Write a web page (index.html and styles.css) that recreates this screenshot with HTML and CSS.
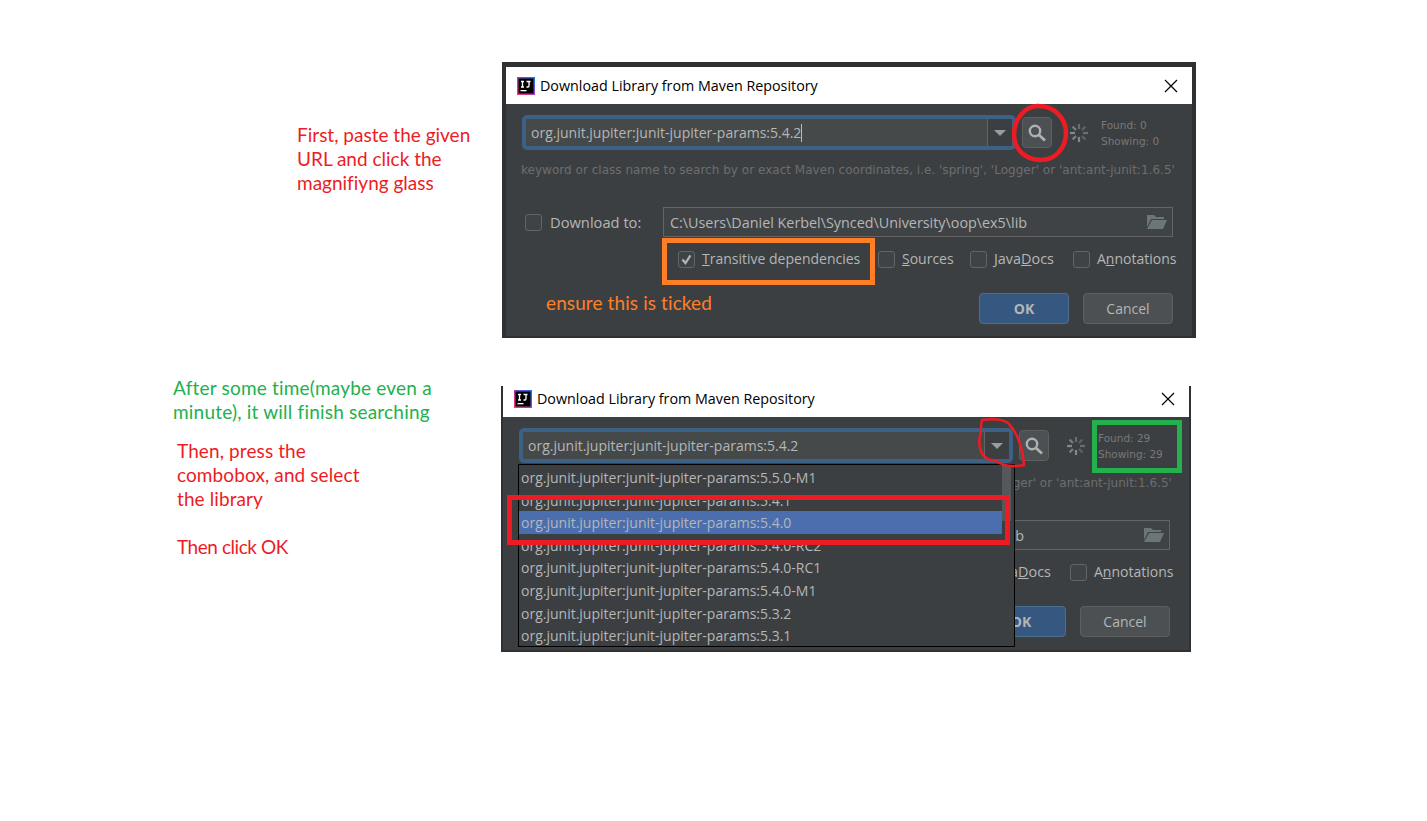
FILE: index.html
```html
<!DOCTYPE html>
<html lang="en">
<head>
<meta charset="utf-8">
<title>Download Library from Maven Repository</title>
<link rel="stylesheet" href="styles.css">
</head>
<body>
<svg width="0" height="0" class="defs">
  <defs>
    <linearGradient id="ij" x1="0" y1="1" x2="1" y2="0">
      <stop offset="0" stop-color="#fe315d"/><stop offset="0.5" stop-color="#a03fc0"/><stop offset="1" stop-color="#087cfa"/>
    </linearGradient>
    <symbol id="logo" viewBox="0 0 18 18">
      <rect width="18" height="18" fill="url(#ij)"/>
      <rect x="1.500" y="1.500" width="15" height="15" fill="#000"/>
      <path d="M4 4.500h3M5.500 4.500v5.500M4 10h3M9.500 4.500h4M12 4.500v4.500q0 1-1 1h-1.500" fill="none" stroke="#fff" stroke-width="1.300"/>
      <rect x="3.500" y="13" width="6" height="1.300" fill="#fff"/>
    </symbol>
    <symbol id="close" viewBox="0 0 14 14">
      <path d="M1 1L13 13M13 1L1 13" stroke="#000" stroke-width="1.200" fill="none"/>
    </symbol>
    <symbol id="search" viewBox="0 0 20 20">
      <circle cx="8" cy="8" r="5.200" fill="none" stroke="#afb1b3" stroke-width="2.400"/>
      <path d="M12 12L18 17.500" stroke="#afb1b3" stroke-width="2.800" fill="none"/>
    </symbol>
    <symbol id="spinner" viewBox="0 0 20 20">
      <g stroke-width="2.200" fill="none">
        <path d="M10 1V6" stroke="#6a6d6f"/><path d="M10 14V19" stroke="#85888a"/>
        <path d="M1 10H6" stroke="#85888a"/><path d="M14 10H19" stroke="#6a6d6f"/>
        <path d="M3.600 3.600L7 7" stroke="#7a7d7f"/><path d="M13 13L16.400 16.400" stroke="#5f6264"/>
        <path d="M16.400 3.600L13 7" stroke="#5f6264"/><path d="M7 13L3.600 16.400" stroke="#7a7d7f"/>
      </g>
    </symbol>
    <symbol id="folder" viewBox="0 0 20 16">
      <path d="M0 2V1h7l2 2h8v2H4L0 13z" fill="#6b7777"/>
      <path d="M5 6h15l-4 9H0z" fill="#6b7777"/>
    </symbol>
    <symbol id="tick" viewBox="0 0 17 17">
      <path d="M3.800 8.500L7.300 12.500L13 3.800" fill="none" stroke="#afb1b3" stroke-width="2.600"/>
    </symbol>
  </defs>
</svg>

<p class="note note-first">First, paste the given<br>URL and click the<br>magnifiyng glass</p>
<p class="note note-time">After some time(maybe even a<br>minute), it will finish searching</p>
<p class="note note-press">Then, press the<br>combobox, and select<br>the library</p>
<p class="note note-ok">Then click OK</p>

<section class="dialog dialog-top">
  <header class="title-bar">
    <svg class="logo"><use href="#logo"/></svg>
    <span class="title-text">Download Library from Maven Repository</span>
    <svg class="close"><use href="#close"/></svg>
  </header>
  <div class="body">
    <div class="search-row">
      <div class="combo">
        <span class="combo-value caret">org.junit.jupiter:junit-jupiter-params:5.4.2</span>
        <span class="combo-arrow"><i class="triangle"></i></span>
      </div>
      <button class="search-btn"><svg class="search-icon"><use href="#search"/></svg></button>
      <svg class="spinner"><use href="#spinner"/></svg>
      <div class="counts"><span>Found: 0</span><span>Showing: 0</span></div>
    </div>
    <p class="hint">keyword or class name to search by or exact Maven coordinates, i.e. 'spring', 'Logger' or 'ant:ant-junit:1.6.5'</p>
    <div class="path-row">
      <span class="check"></span>
      <span class="label label-download">Download to:</span>
      <div class="path-field"><span>C:\Users\Daniel Kerbel\Synced\University\oop\ex5\lib</span><svg class="folder"><use href="#folder"/></svg></div>
    </div>
    <div class="options-row">
      <span class="check"><svg class="tick"><use href="#tick"/></svg></span>
      <span class="label label-transitive"><u>T</u>ransitive dependencies</span>
      <span class="check"></span>
      <span class="label label-sources"><u>S</u>ources</span>
      <span class="check"></span>
      <span class="label label-javadocs">Java<u>D</u>ocs</span>
      <span class="check"></span>
      <span class="label">A<u>n</u>notations</span>
    </div>
    <div class="button-row">
      <button class="btn btn-primary">OK</button>
      <button class="btn">Cancel</button>
    </div>
  </div>
</section>

<section class="dialog dialog-bottom">
  <header class="title-bar">
    <svg class="logo"><use href="#logo"/></svg>
    <span class="title-text">Download Library from Maven Repository</span>
    <svg class="close"><use href="#close"/></svg>
  </header>
  <div class="body">
    <div class="search-row">
      <div class="combo">
        <span class="combo-value">org.junit.jupiter:junit-jupiter-params:5.4.2</span>
        <span class="combo-arrow"><i class="triangle"></i></span>
      </div>
      <button class="search-btn"><svg class="search-icon"><use href="#search"/></svg></button>
      <svg class="spinner"><use href="#spinner"/></svg>
      <div class="counts"><span>Found: 29</span><span>Showing: 29</span></div>
    </div>
    <p class="hint">keyword or class name to search by or exact Maven coordinates, i.e. 'spring', 'Logger' or 'ant:ant-junit:1.6.5'</p>
    <div class="path-row">
      <span class="check"></span>
      <span class="label label-download">Download to:</span>
      <div class="path-field"><span>C:\Users\Daniel Kerbel\Synced\University\oop\ex5\lib</span><svg class="folder"><use href="#folder"/></svg></div>
    </div>
    <div class="options-row">
      <span class="check"><svg class="tick"><use href="#tick"/></svg></span>
      <span class="label label-transitive"><u>T</u>ransitive dependencies</span>
      <span class="check"></span>
      <span class="label label-sources"><u>S</u>ources</span>
      <span class="check"></span>
      <span class="label label-javadocs">Java<u>D</u>ocs</span>
      <span class="check"></span>
      <span class="label">A<u>n</u>notations</span>
    </div>
    <div class="button-row">
      <button class="btn btn-primary">OK</button>
      <button class="btn">Cancel</button>
    </div>
  </div>
</section>

<div class="popup">
  <ul class="popup-list">
    <li>org.junit.jupiter:junit-jupiter-params:5.5.0-M1</li>
    <li>org.junit.jupiter:junit-jupiter-params:5.4.1</li>
    <li class="selected">org.junit.jupiter:junit-jupiter-params:5.4.0</li>
    <li>org.junit.jupiter:junit-jupiter-params:5.4.0-RC2</li>
    <li>org.junit.jupiter:junit-jupiter-params:5.4.0-RC1</li>
    <li>org.junit.jupiter:junit-jupiter-params:5.4.0-M1</li>
    <li>org.junit.jupiter:junit-jupiter-params:5.3.2</li>
    <li>org.junit.jupiter:junit-jupiter-params:5.3.1</li>
  </ul>
  <div class="popup-scroll"><div class="popup-thumb"></div></div>
</div>

<div class="mark box-orange"></div>
<p class="note note-ticked">ensure this is ticked</p>
<div class="mark box-red"></div>
<div class="mark box-green"></div>
<svg class="scribbles" viewBox="0 0 1427 821" width="1427" height="821">
  <path d="M1039 106C1025 105 1014 120 1014 134C1014 150 1026 160 1041 160C1056 160 1066 147 1066 133C1066 118 1054 106 1039 106Z" fill="none" stroke="#ed1c24" stroke-width="4.500"/>
  <path d="M982 420C990 419 1002 419 1008 423C1017 432 1023 448 1024 465C1014 467 1003 466 996 461C992 460 984 460 981 451C979 446 979 440 980 436C981 430 981 425 982 420Z" fill="none" stroke="#ed1c24" stroke-width="2.500"/>
</svg>
</body>
</html>
```

FILE: styles.css
```css
* { box-sizing: border-box; }
html, body { margin: 0; padding: 0; }
body {
  position: relative;
  width: 1427px;
  height: 821px;
  overflow: hidden;
  background: #fff;
  font-family: "Open Sans", "Noto Sans", sans-serif;
}
.defs { position: absolute; }

/* annotations on the free canvas */
.note {
  position: absolute;
  margin: 0;
  font-family: Lato, "Open Sans", sans-serif;
  font-size: 19px;
  font-variant-ligatures: none;
  line-height: 24px;
  color: #ed1c24;
  white-space: nowrap;
}
.note-first { left: 297px; top: 123px; }
.note-time { left: 173px; top: 376px; color: #22b14c; letter-spacing: 0.2px; }
.note-press { left: 177px; top: 439px; letter-spacing: 0.1px; }
.note-ok { left: 177px; top: 535px; letter-spacing: -0.45px; }
.note-ticked { left: 546px; top: 291px; color: #ff7f27; letter-spacing: 0.1px; }

.mark { position: absolute; border-style: solid; border-width: 5px; }
.box-orange { left: 662px; top: 238px; width: 213px; height: 47px; border-color: #ff7f27; }
.box-red { left: 507px; top: 495px; width: 503px; height: 50px; border-color: #ed1c24; }
.box-green { left: 1092px; top: 420px; width: 90px; height: 53px; border-color: #22b14c; }
.scribbles { position: absolute; left: 0; top: 0; pointer-events: none; }

/* dialogs */
.dialog {
  position: absolute;
  display: flex;
  flex-direction: column;
  background: #3c3f41;
  border: 0 solid #2f3133;
  overflow: hidden;
}
.dialog-top {
  left: 502px;
  top: 62px;
  width: 694px;
  height: 276px;
  border-width: 5px 4px 2px;
}
.dialog-bottom {
  left: 501px;
  top: 386px;
  width: 690px;
  height: 266px;
  border-width: 0 2px 2px;
}
.title-bar {
  display: flex;
  align-items: center;
  flex: none;
  height: 37px;
  padding: 0 14px 0 11px;
  background: #fff;
}
.dialog-bottom .title-bar { height: 31px; padding-bottom: 6px; }
.logo { width: 18px; height: 18px; flex: none; }
.title-text {
  margin-left: 5px;
  flex: 1;
  font-size: 14.300px;
  line-height: 18px;
  color: #000;
  white-space: nowrap;
}
.close { width: 14px; height: 14px; flex: none; }

.body {
  flex: 1;
  padding: 11px 19px 0 16px;
  color: #b4b6b7;
  font-size: 14px;
}
.search-row { display: flex; align-items: center; height: 35px; }
.combo {
  display: flex;
  width: 494px;
  height: 35px;
  border: 4px solid #3d6185;
  border-radius: 5px;
  background: #45494a;
}
.combo-value {
  flex: 1;
  padding-left: 5px;
  font-size: 14px;
  line-height: 28px;
  white-space: nowrap;
}
.caret::after {
  content: "";
  display: inline-block;
  width: 1px;
  height: 18px;
  margin-left: 0;
  vertical-align: -4px;
  background: #bbbbbb;
}
.combo-arrow {
  display: flex;
  align-items: center;
  justify-content: center;
  width: 25px;
  border-left: 1px solid #646464;
  background: #3c3f41;
}
.triangle {
  width: 0;
  height: 0;
  border-style: solid;
  border-width: 6px 6px 0;
  border-color: #9a9d9f transparent transparent;
}
.search-btn {
  display: flex;
  align-items: center;
  justify-content: center;
  width: 30px;
  height: 31px;
  margin-left: 6px;
  padding: 0;
  background: #4c5052;
  border: 1px solid #5e6060;
  border-radius: 4px;
}
.search-icon { width: 20px; height: 20px; }
.spinner { width: 20px; height: 20px; margin-left: 17px; flex: none; }
.counts {
  display: flex;
  flex-direction: column;
  margin-left: 12px;
  font-family: "DejaVu Sans", sans-serif;
  font-size: 10.500px;
  line-height: 16px;
  color: #787878;
  white-space: nowrap;
}
.hint {
  margin: 12px 0 0 -1px;
  font-family: "DejaVu Sans", sans-serif;
  font-size: 12.050px;
  line-height: 16px;
  color: #6b6e70;
  white-space: nowrap;
}
.path-row { display: flex; align-items: center; height: 30px; margin-top: 29px; padding-left: 3px; }
.check {
  display: flex;
  flex: none;
  width: 17px;
  height: 17px;
  background: #404345;
  border: 1px solid #626466;
  border-radius: 3px;
}
.tick { width: 15px; height: 15px; }
.label { flex: none; margin-left: 7px; white-space: nowrap; line-height: 18px; }
.label-download { width: 113px; margin-left: 8px; font-size: 14.700px; }
.path-field {
  display: flex;
  flex: none;
  align-items: center;
  justify-content: space-between;
  width: 510px;
  height: 30px;
  padding: 0 5px 0 6px;
  border: 1px solid #646464;
  white-space: nowrap;
  background: #3f4345;
  font-size: 14.350px;
}
.folder { width: 20px; height: 16px; flex: none; }
.options-row { display: flex; align-items: center; height: 18px; margin-top: 13px; padding-left: 156px; }
.label-transitive { width: 159px; margin-right: 17px; }
.label-sources { width: 51px; margin-right: 17px; }
.label-javadocs { width: 62px; margin-right: 17px; font-size: 14.400px; }
.button-row { display: flex; justify-content: flex-end; gap: 14px; margin-top: 25px; padding-right: 0; }
.btn {
  width: 90px;
  height: 31px;
  padding: 0;
  font-family: inherit;
  font-size: 14px;
  color: #b4b6b7;
  background: #4c5052;
  border: 1px solid #5e6060;
  border-radius: 4px;
}
.btn-primary {
  font-weight: 700;
  background: #365880;
  border-color: #4c708c;
}

/* popup of the second dialog */
.popup {
  position: absolute;
  left: 518px;
  top: 464px;
  width: 497px;
  height: 183px;
  display: flex;
  background: #3c3f41;
  border: 1px solid #000;
  overflow: hidden;
}
.popup-list {
  flex: 1;
  list-style: none;
  margin: 0;
  padding: 1px 0 0;
  color: #b4b6b7;
  font-size: 14px;
}
.popup-list li { height: 22.600px; padding-left: 2px; line-height: 24px; white-space: nowrap; }
.popup-list .selected { background: #4b6eaf; }
.popup-scroll { width: 12px; flex: none; }
.popup-thumb { width: 9px; height: 56px; background: #55585a; }
```
